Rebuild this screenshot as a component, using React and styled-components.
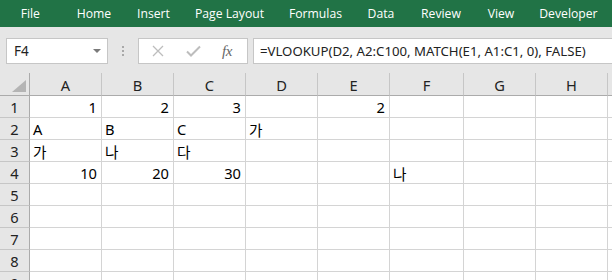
import React from "react";
import styled, { createGlobalStyle } from "styled-components";

const Global = createGlobalStyle`
  html, body { margin: 0; padding: 0; background: #ffffff; overflow: hidden; }
  * { box-sizing: border-box; }
`;

const UI = `"Open Sans", "Noto Sans", "Noto Sans CJK KR", sans-serif`;
const CELL = `"Noto Sans", "Noto Sans CJK KR", sans-serif`;

const Page = styled.div`
  width: 612px;
  height: 280px;
  overflow: hidden;
  display: flex;
  flex-direction: column;
`;

const MenuBar = styled.div`
  height: 27px;
  background: #217346;
  display: flex;
  align-items: center;
  font-family: ${UI};
  font-size: 12.2px;
  color: #ffffff;
  flex-shrink: 0;
`;

const Tab = styled.span`
  width: ${(p) => p.$w}px;
  flex-shrink: 0;
  text-align: center;
  white-space: nowrap;
  padding-bottom: 1px;
`;

const FormulaArea = styled.div`
  height: 46px;
  background: #e6e6e6;
  display: flex;
  align-items: flex-start;
  padding-top: 11px;
  padding-left: 6px;
  flex-shrink: 0;
`;

const NameBox = styled.div`
  width: 102px;
  height: 26px;
  background: #ffffff;
  border: 1px solid #c6c6c6;
  display: flex;
  align-items: center;
  justify-content: space-between;
  padding: 0 6px 0 7px;
  font-family: ${CELL};
  font-size: 13.5px;
  color: #222;
`;

const DropArrow = styled.span`
  width: 0;
  height: 0;
  border-left: 4px solid transparent;
  border-right: 4px solid transparent;
  border-top: 4px solid #7a7a7a;
`;

const Grip = styled.div`
  width: 30px;
  height: 26px;
  display: flex;
  flex-direction: column;
  align-items: center;
  justify-content: center;
  gap: 2px;
`;

const GripDot = styled.span`
  width: 2px;
  height: 2px;
  background: #a8a8a8;
`;

const FxBox = styled.div`
  width: 110px;
  height: 26px;
  background: #ffffff;
  border: 1px solid #c6c6c6;
  display: flex;
  align-items: center;
  padding-left: 13px;
`;

const IconSlot = styled.span`
  width: ${(p) => p.$w}px;
  margin-right: ${(p) => p.$mr}px;
  display: flex;
  align-items: center;
  justify-content: center;
`;

const Fx = styled.span`
  font-family: "Liberation Serif", serif;
  font-style: italic;
  font-size: 15px;
  color: #666666;
  letter-spacing: -0.5px;
`;

const FormulaInput = styled.div`
  flex: 1;
  margin-left: 5px;
  height: 26px;
  background: #ffffff;
  border: 1px solid #c6c6c6;
  border-right: none;
  display: flex;
  align-items: center;
  padding-left: 6px;
  font-family: ${CELL};
  font-size: 13.2px;
  color: #222;
  white-space: nowrap;
  overflow: hidden;
`;

const COLS = [
  ["A", 72],
  ["B", 72],
  ["C", 72],
  ["D", 72],
  ["E", 72],
  ["F", 74],
  ["G", 72],
  ["H", 72],
  ["", 40],
];

const Grid = styled.div`
  display: grid;
  grid-template-columns: 30px ${COLS.map((c) => c[1] + "px").join(" ")};
  grid-auto-rows: 22px;
  grid-template-rows: 23px;
  font-family: ${CELL};
  font-size: 14.67px;
`;

const Corner = styled.div`
  background: #e6e6e6;
  border-right: 1px solid #ababab;
  border-bottom: 1px solid #ababab;
  position: relative;
`;

const CornerTri = styled.span`
  position: absolute;
  right: 3px;
  bottom: 3px;
  width: 0;
  height: 0;
  border-left: 14px solid transparent;
  border-bottom: 12px solid #b4b4b4;
`;

const ColHead = styled.div`
  background: #e6e6e6;
  border-right: 1px solid #c6c6c6;
  border-bottom: 1px solid #ababab;
  display: flex;
  align-items: center;
  justify-content: center;
  color: #222;
  padding-top: 1px;
`;

const RowHead = styled.div`
  background: #e6e6e6;
  border-right: 1px solid #ababab;
  border-bottom: 1px solid #c6c6c6;
  display: flex;
  align-items: center;
  justify-content: center;
  color: #222;
`;

const Cell = styled.div`
  border-right: 1px solid #d4d4d4;
  border-bottom: 1px solid #d4d4d4;
  display: flex;
  align-items: center;
  justify-content: ${(p) => (p.$num ? "flex-end" : "flex-start")};
  padding: 1px 4px 0 3px;
  color: #000;
  white-space: nowrap;
  overflow: hidden;
`;

const DATA = {
  1: { A: 1, B: 2, C: 3, E: 2 },
  2: { A: "A", B: "B", C: "C", D: "가" },
  3: { A: "가", B: "나", C: "다" },
  4: { A: 10, B: 20, C: 30, F: "나" },
};

const TABS = [
  ["File", 60.6],
  ["Home", 66.8],
  ["Insert", 52.2],
  ["Page Layout", 99.8],
  ["Formulas", 72.2],
  ["Data", 58.8],
  ["Review", 61.2],
  ["View", 58.8],
  ["Developer", 76.2],
];

export default function App() {
  const rows = [1, 2, 3, 4, 5, 6, 7, 8, 9];
  return (
    <Page>
      <Global />
      <MenuBar>
        {TABS.map(([t, w]) => (
          <Tab key={t} $w={w}>
            {t}
          </Tab>
        ))}
      </MenuBar>
      <FormulaArea>
        <NameBox>
          <span>F4</span>
          <DropArrow />
        </NameBox>
        <Grip>
          <GripDot />
          <GripDot />
          <GripDot />
        </Grip>
        <FxBox>
          <IconSlot $w={12} $mr={22}>
            <svg width="12" height="12" viewBox="0 0 12 12">
              <path d="M1 1 L11 11 M11 1 L1 11" stroke="#bdbdbd" strokeWidth="1.3" fill="none" />
            </svg>
          </IconSlot>
          <IconSlot $w={15} $mr={21}>
            <svg width="15" height="12" viewBox="0 0 15 12">
              <path d="M1 6.5 L5 10.5 L14 1.5" stroke="#bdbdbd" strokeWidth="2" fill="none" />
            </svg>
          </IconSlot>
          <Fx>fx</Fx>
        </FxBox>
        <FormulaInput>=VLOOKUP(D2, A2:C100, MATCH(E1, A1:C1, 0), FALSE)</FormulaInput>
      </FormulaArea>
      <Grid>
        <Corner>
          <CornerTri />
        </Corner>
        {COLS.map(([c]) => (
          <ColHead key={"h" + c}>{c}</ColHead>
        ))}
        {rows.map((r) => (
          <React.Fragment key={r}>
            <RowHead>{r}</RowHead>
            {COLS.map(([c]) => {
              const v = DATA[r] && DATA[r][c];
              return (
                <Cell key={c + r} $num={typeof v === "number"}>
                  {v}
                </Cell>
              );
            })}
          </React.Fragment>
        ))}
      </Grid>
    </Page>
  );
}
